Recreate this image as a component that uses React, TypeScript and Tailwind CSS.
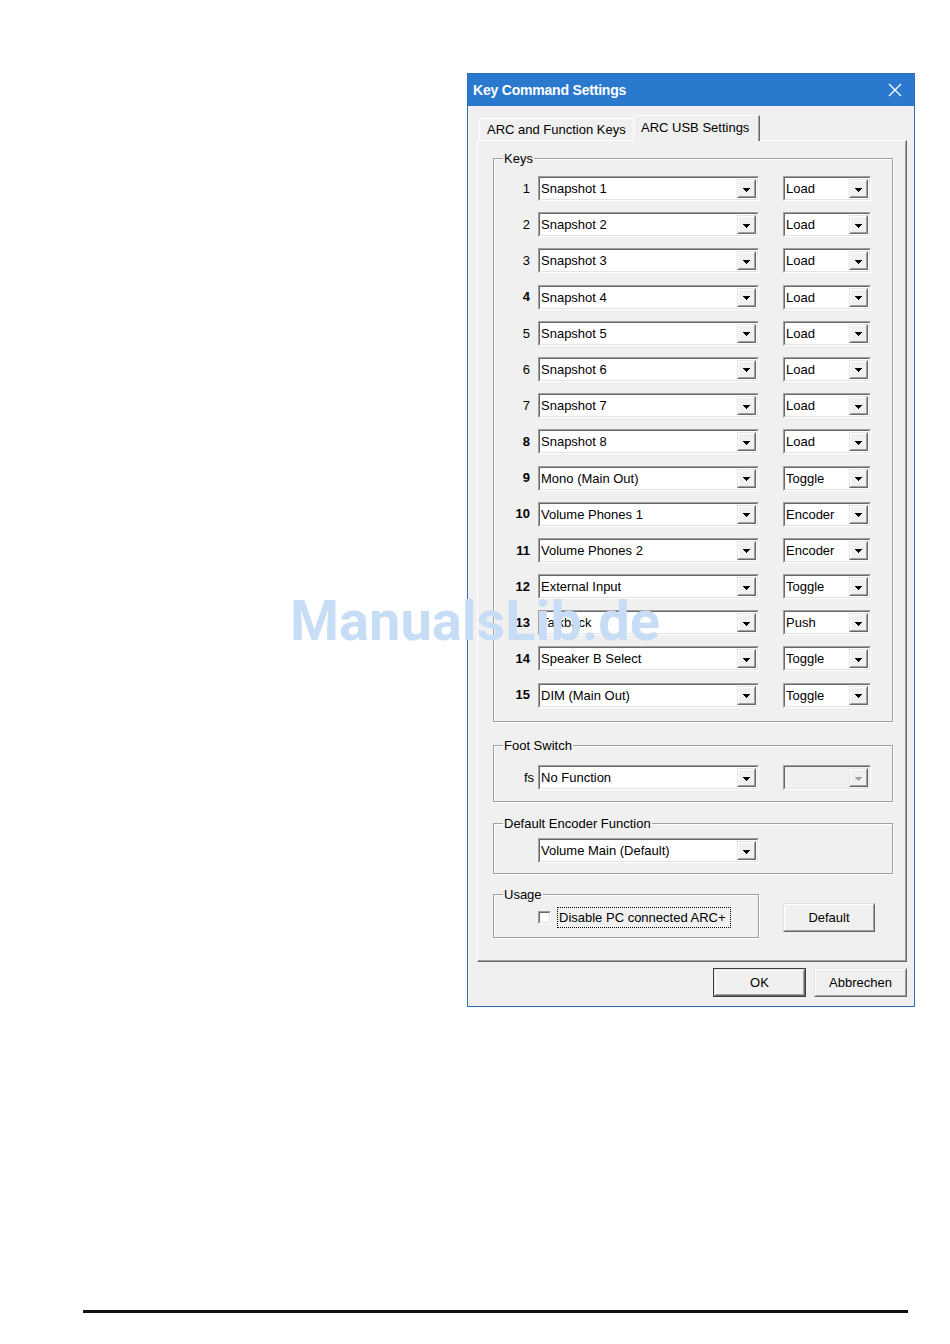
const rows: [number, string, string, boolean][] = [
  [1, 'Snapshot 1', 'Load', false],
  [2, 'Snapshot 2', 'Load', false],
  [3, 'Snapshot 3', 'Load', false],
  [4, 'Snapshot 4', 'Load', true],
  [5, 'Snapshot 5', 'Load', false],
  [6, 'Snapshot 6', 'Load', false],
  [7, 'Snapshot 7', 'Load', false],
  [8, 'Snapshot 8', 'Load', true],
  [9, 'Mono (Main Out)', 'Toggle', true],
  [10, 'Volume Phones 1', 'Encoder', true],
  [11, 'Volume Phones 2', 'Encoder', true],
  [12, 'External Input', 'Toggle', true],
  [13, 'Talkback', 'Push', true],
  [14, 'Speaker B Select', 'Toggle', true],
  [15, 'DIM (Main Out)', 'Toggle', true],
];

function Arrow({ disabled = false }: { disabled?: boolean }) {
  return (
    <svg width="7" height="4" viewBox="0 0 7 4" shapeRendering="crispEdges">
      <path
        d="M0 0H7V1H6V2H5V3H4V4H3V3H2V2H1V1H0Z"
        fill={disabled ? '#a0a0a0' : '#000'}
      />
    </svg>
  );
}

function DropButton({ disabled = false }: { disabled?: boolean }) {
  return (
    <div className="flex w-[19px] border border-t-[#e3e3e3] border-l-[#e3e3e3] border-r-[#696969] border-b-[#696969]">
      <div className="flex flex-1 items-center justify-center border border-t-white border-l-white border-r-[#a0a0a0] border-b-[#a0a0a0] bg-[#f0f0f0] pt-[2px]">
        <Arrow disabled={disabled} />
      </div>
    </div>
  );
}

function Combo({
  text,
  width,
  disabled = false,
}: {
  text: string;
  width: string;
  disabled?: boolean;
}) {
  return (
    <div className={`flex h-[25px] border border-t-[#a0a0a0] border-l-[#a0a0a0] border-r-white border-b-white ${width}`}>
      <div
        className={`flex flex-1 border border-t-[#696969] border-l-[#696969] border-r-[#e3e3e3] border-b-[#e3e3e3] p-[1px] ${
          disabled ? 'bg-[#f0f0f0]' : 'bg-white'
        }`}
      >
        <span className="flex-1 truncate leading-[19px]">{text}</span>
        <DropButton disabled={disabled} />
      </div>
    </div>
  );
}

function Group({
  title,
  className,
  children,
}: {
  title: string;
  className: string;
  children: React.ReactNode;
}) {
  return (
    <fieldset
      className={`border border-[#a0a0a0] shadow-[inset_1px_1px_0_#fff,1px_1px_0_#fff] ${className}`}
    >
      <legend className="ml-[9px] bg-[#f0f0f0] px-[1px] leading-[15px]">{title}</legend>
      {children}
    </fieldset>
  );
}

function WinButton({
  label,
  width,
  isDefault = false,
}: {
  label: string;
  width: string;
  isDefault?: boolean;
}) {
  return (
    <div className={`flex h-[29px] ${width} ${isDefault ? 'border border-[#3c3c3c]' : ''}`}>
      <div className="flex flex-1 border border-t-[#e3e3e3] border-l-[#e3e3e3] border-r-[#696969] border-b-[#696969]">
        <div className="flex flex-1 items-center justify-center border border-t-white border-l-white border-r-[#a0a0a0] border-b-[#a0a0a0] bg-[#f0f0f0]">
          {label}
        </div>
      </div>
    </div>
  );
}

export default function App() {
  return (
    <div className="relative h-[1344px] w-[950px] overflow-hidden bg-white font-['Liberation_Sans',Arial,sans-serif] text-[13px] text-black">
      <div className="ml-[467px] mt-[73px] flex w-[448px] flex-col border border-[#2a6fba] bg-[#f0f0f0]">
        {/* title bar */}
        <div className="flex h-[32px] items-center justify-between bg-[#2b79cf] pl-[5px] pr-[12px] text-white">
          <span className="text-[14px] font-bold tracking-[-0.2px]">Key Command Settings</span>
          <svg width="14" height="14" viewBox="0 0 14 14">
            <path d="M1 1L13 13M13 1L1 13" stroke="#fff" strokeWidth="1.3" />
          </svg>
        </div>

        <div className="flex flex-col pl-[9px] pr-[7px] pt-[9px] pb-[9px]">
          {/* tabs */}
          <div className="flex h-[25px] items-end pl-[2px]">
            <div className="flex h-[22px] w-[154px] items-start rounded-tl-[2px] border-l border-t border-white pl-[7px] pt-[1px]">
              ARC and Function Keys
            </div>
            <div className="relative z-10 -mb-[1px] flex h-[26px] w-[127px] items-start rounded-tl-[2px] border-l border-t border-r border-l-white border-t-white border-r-[#696969] bg-[#f0f0f0] pl-[7px] pt-[2px] shadow-[inset_-1px_0_0_#a0a0a0]">
              ARC USB Settings
            </div>
          </div>

          {/* panel */}
          <div className="flex flex-col border border-l-white border-t-white border-r-[#696969] border-b-[#696969] pl-[15px] pt-[10px] pb-[23px] shadow-[inset_-1px_-1px_0_#a0a0a0]">
            <Group title="Keys" className="w-[400px] pt-[10px] pb-[13px]">
              <div className="flex flex-col gap-[11.2px]">
                {rows.map(([n, fn, mode, bold]) => (
                  <div key={n} className="flex items-center">
                    <span className={`w-[44px] pr-[8px] text-right ${bold ? 'font-bold' : ''}`}>{n}</span>
                    <Combo text={fn} width="w-[221px]" />
                    <div className="ml-[24px]">
                      <Combo text={mode} width="w-[88px]" />
                    </div>
                  </div>
                ))}
              </div>
            </Group>

            <Group title="Foot Switch" className="mt-[16.5px] w-[400px] pt-[12px] pb-[11px]">
              <div className="flex items-center">
                <span className="w-[44px] pr-[4px] text-right">fs</span>
                <Combo text="No Function" width="w-[221px]" />
                <div className="ml-[24px]">
                  <Combo text="" width="w-[88px]" disabled />
                </div>
              </div>
            </Group>

            <Group title="Default Encoder Function" className="mt-[14px] w-[400px] pt-[7px] pb-[10px]">
              <div className="flex pl-[44px]">
                <Combo text="Volume Main (Default)" width="w-[221px]" />
              </div>
            </Group>

            <div className="mt-[13px] flex items-start">
              <Group title="Usage" className="w-[266px] pt-[5px] pb-[9px]">
                <div className="flex h-[21px] items-center pl-[44px]">
                  <div className="h-[13px] w-[13px] border border-t-[#a0a0a0] border-l-[#a0a0a0] border-r-white border-b-white">
                    <div className="h-full w-full border border-t-[#696969] border-l-[#696969] border-r-[#e3e3e3] border-b-[#e3e3e3] bg-white" />
                  </div>
                  <span className="ml-[6px] flex h-[21px] w-[174px] items-center border border-dotted border-black pl-[1px]">
                    Disable PC connected ARC+
                  </span>
                </div>
              </Group>
              <div className="ml-[24px] mt-[16px]">
                <WinButton label="Default" width="w-[92px]" />
              </div>
            </div>
          </div>

          {/* bottom buttons */}
          <div className="mt-[6px] flex justify-end gap-[8px]">
            <WinButton label="OK" width="w-[93px]" isDefault />
            <WinButton label="Abbrechen" width="w-[93px]" />
          </div>
        </div>
      </div>

      <div className="ml-[83px] mt-[303px] h-[3px] w-[825px] bg-[#111]" />

      {/* watermark */}
      <div className="pointer-events-none absolute left-[290px] top-[593px] font-['Roboto',Arial,sans-serif] text-[56px] font-bold leading-none text-[#c7ddf6]">
        ManualsLib.de
      </div>
    </div>
  );
}
